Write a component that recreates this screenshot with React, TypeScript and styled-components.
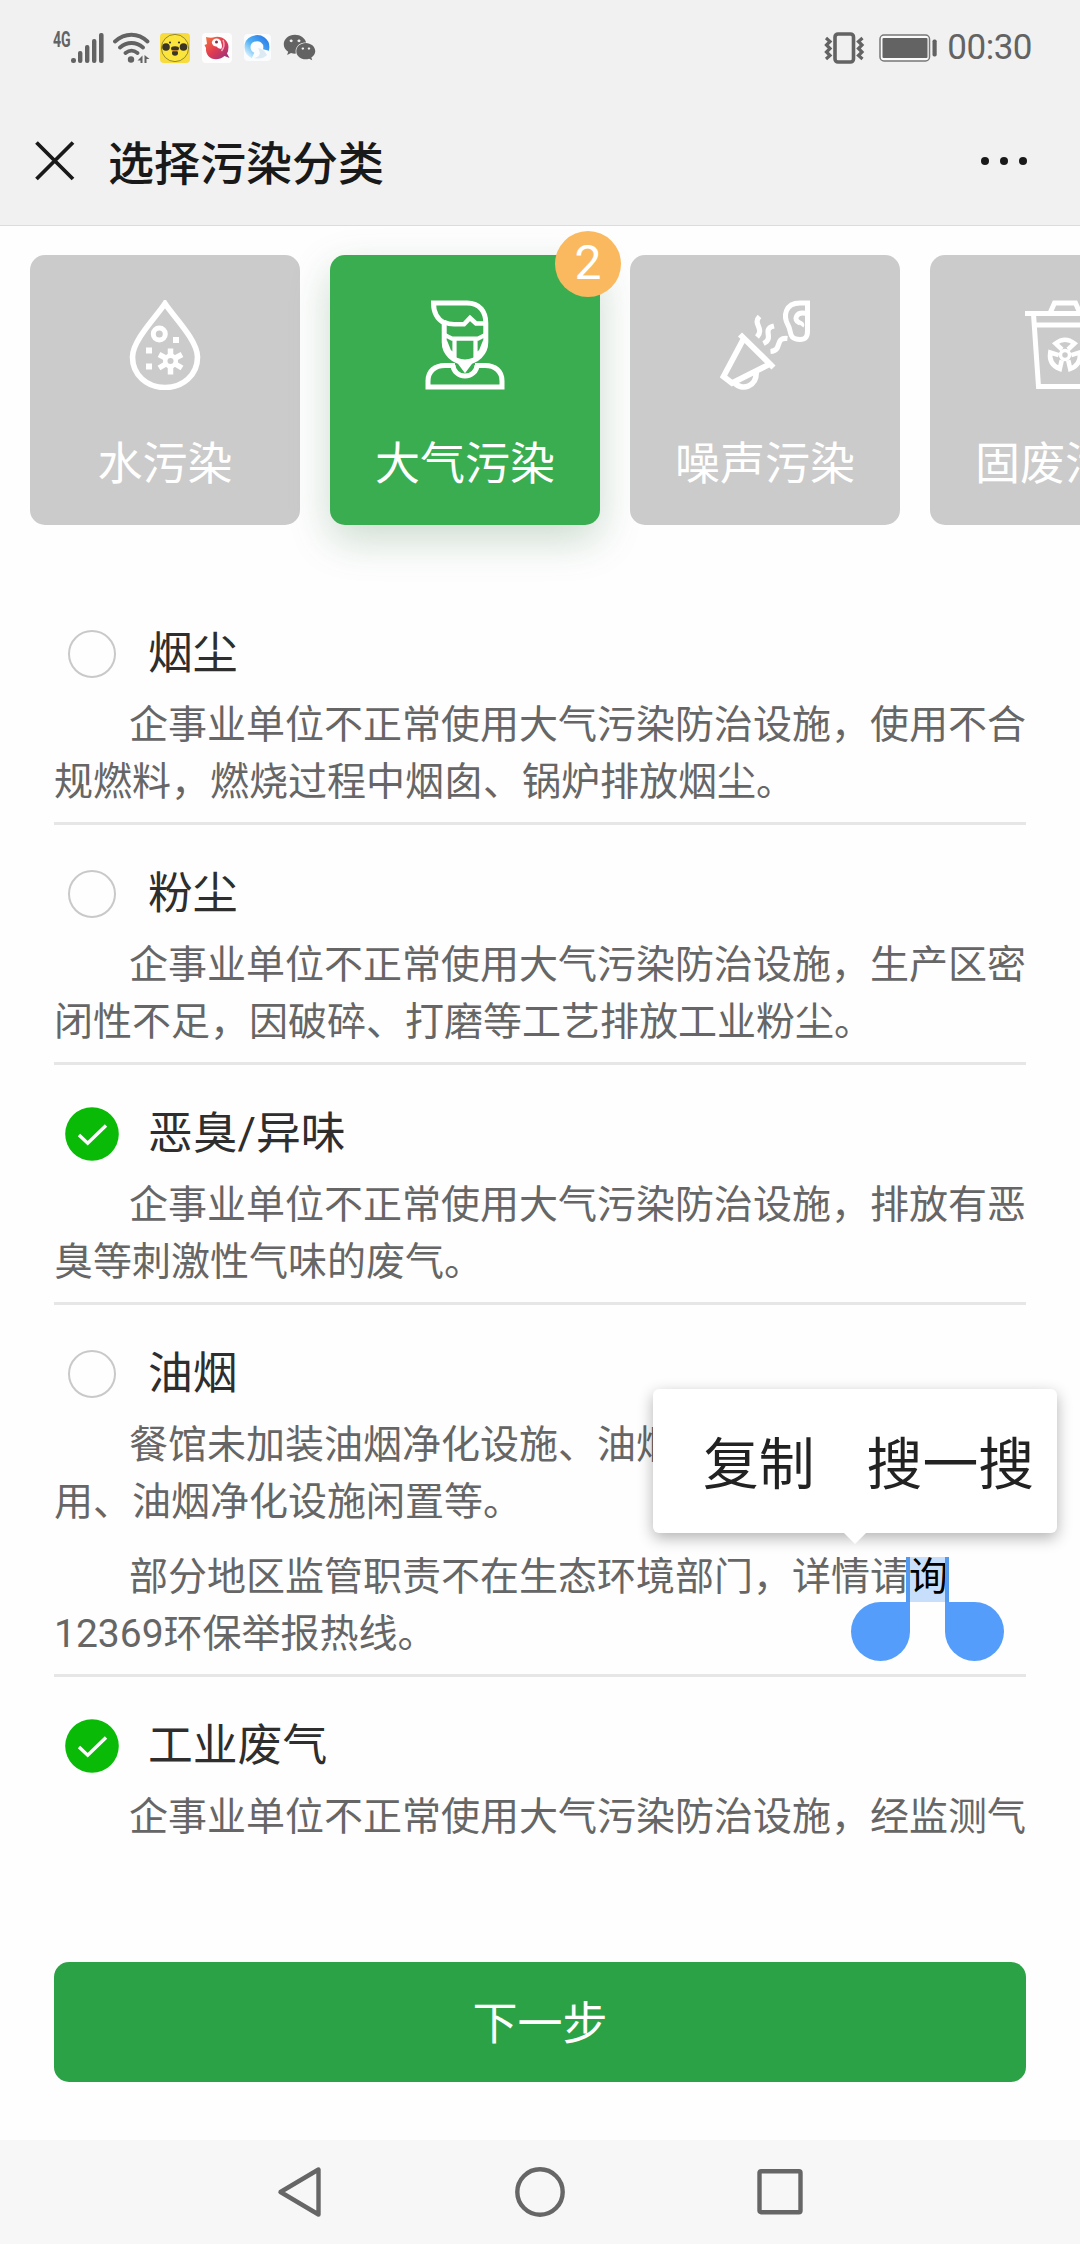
import React from 'react';
import styled, { createGlobalStyle } from 'styled-components';
import { FaWeixin } from 'react-icons/fa';

const GlobalStyle = createGlobalStyle`
  * { box-sizing: border-box; }
  body {
    margin: 0;
    background: #fefefe;
    font-family: Roboto, 'Noto Sans CJK SC', sans-serif;
    color: #2e2e2e;
  }
`;

const Screen = styled.div`
  position: relative;
  display: flex;
  flex-direction: column;
  width: 1080px;
  height: 2244px;
  overflow: hidden;
  background: #fefefe;
`;

const Header = styled.header`
  height: 226px;
  background: #f1f1f1;
  border-bottom: 1px solid #dcdcdc;
`;

const StatusBar = styled.div`
  display: flex;
  align-items: center;
  justify-content: space-between;
  height: 95px;
  padding: 0 48px 0 53px;
  color: #636363;
`;

const StatusGroup = styled.div<{ $gap: number }>`
  display: flex;
  align-items: center;
  gap: ${(p) => p.$gap}px;
  svg { display: block; }
`;

const NetworkLabel = styled.span`
  align-self: flex-start;
  margin: -2px -2px 0 0;
  font-size: 22px;
  line-height: 20px;
  font-weight: 700;
  transform: scaleX(0.64);
  transform-origin: left;
  width: 20px;
`;

const Clock = styled.span`
  margin-left: -3px;
  font-size: 35px;
  line-height: 40px;
  letter-spacing: -0.5px;
`;

const TitleBar = styled.div`
  display: flex;
  align-items: center;
  height: 130px;
  padding: 2px 52px 0 35px;
`;

const PageTitle = styled.h1`
  flex: 1;
  margin: 5px 0 0 33px;
  font-size: 46px;
  line-height: 60px;
  font-weight: 500;
  color: #191919;
`;

const Categories = styled.nav`
  display: flex;
  gap: 30px;
  padding: 29px 0 0 30px;
`;

const CategoryCard = styled.div<{ $active?: boolean }>`
  position: relative;
  display: flex;
  flex: none;
  flex-direction: column;
  align-items: center;
  width: 270px;
  height: 270px;
  padding-top: 45px;
  border-radius: 15px;
  color: #fff;
  background: ${(p) => (p.$active ? '#39ad50' : '#cbcbcb')};
  box-shadow: ${(p) => (p.$active ? '0 15px 42px rgba(45, 110, 60, 0.24)' : 'none')};
`;

const CategoryName = styled.span`
  margin-top: 45px;
  font-size: 45px;
  line-height: 60px;
  white-space: nowrap;
`;

const Badge = styled.span`
  position: absolute;
  top: -24px;
  right: -21px;
  width: 66px;
  height: 66px;
  border-radius: 50%;
  background: #fab95f;
  font-size: 48px;
  line-height: 64px;
  text-align: center;
`;

const OptionList = styled.main`
  display: flex;
  flex-direction: column;
  height: 1261px;
  margin-top: 60px;
  padding: 0 54px;
  overflow: hidden;
`;

const Option = styled.section`
  flex: none;
  padding: 39px 0 11px;
  border-bottom: 3px solid #e6e6e6;
`;

const OptionHead = styled.div`
  display: flex;
  align-items: center;
  height: 60px;
  margin-bottom: 13px;
`;

const RadioSlot = styled.span`
  display: flex;
  align-items: center;
  justify-content: center;
  width: 54px;
  height: 54px;
  margin: 0 29px 0 11px;
`;

const EmptyRadio = styled.span`
  width: 48px;
  height: 48px;
  border: 2px solid #c9c9c9;
  border-radius: 50%;
`;

const OptionTitle = styled.span`
  font-size: 44.8px;
  line-height: 60px;
`;

const Description = styled.p`
  margin: 0;
  font-size: 39px;
  line-height: 57px;
  text-indent: 75px;
  color: #666;
  & + & { margin-top: 18px; }
`;

const Selected = styled.span`
  position: relative;
  padding-bottom: 2px;
  color: #000;
  text-indent: 0;
  background: linear-gradient(transparent 3px, #c8dffb 3px);
`;

const Handle = styled.i<{ $side: 'left' | 'right' }>`
  position: absolute;
  top: 3px;
  ${(p) => (p.$side === 'left' ? 'right: 100%; margin-right: -1px;' : 'left: 100%; margin-left: -3px;')}
  width: 59px;
  height: 104px;
  &::before {
    content: '';
    position: absolute;
    top: 0;
    ${(p) => (p.$side === 'left' ? 'right' : 'left')}: 0;
    width: 4px;
    height: 50px;
    background: #5399f0;
  }
  &::after {
    content: '';
    position: absolute;
    bottom: 0;
    left: 0;
    width: 59px;
    height: 59px;
    background: #549dfb;
    border-radius: ${(p) => (p.$side === 'left' ? '50% 0 50% 50%' : '0 50% 50% 50%')};
  }
`;

const ContextMenu = styled.div`
  position: absolute;
  top: 1389px;
  left: 653px;
  display: flex;
  align-items: center;
  gap: 52px;
  width: 404px;
  height: 144px;
  padding: 8px 0 0 50px;
  border-radius: 6px;
  background: #fff;
  color: #222;
  font-size: 55.8px;
  line-height: 80px;
  white-space: nowrap;
  box-shadow: 0 5px 15px rgba(0, 0, 0, 0.3);
  &::after {
    content: '';
    position: absolute;
    top: 100%;
    left: 191px;
    border: 11px solid transparent;
    border-top-color: #fff;
    border-bottom: 0;
  }
`;

const Footer = styled.footer`
  flex: 1;
  padding: 116px 54px 0;
`;

const NextButton = styled.button`
  display: block;
  width: 972px;
  height: 120px;
  padding: 5px 0 0;
  border: 0;
  border-radius: 15px;
  background: #2ca246;
  color: #fff;
  font-family: inherit;
  font-size: 45px;
  line-height: 60px;
`;

const NavBar = styled.div`
  display: flex;
  align-items: center;
  justify-content: space-between;
  height: 104px;
  padding: 0 275px;
  background: #f7f7f7;
`;

const SignalIcon = () => (
  <svg width="33" height="32" viewBox="0 0 33 32" fill="currentColor">
    <rect x="0" y="26" width="5" height="5" rx="2.2" />
    <rect x="7" y="19" width="4.4" height="12" rx="2" />
    <rect x="14" y="13" width="4.4" height="18" rx="2" />
    <rect x="21" y="7" width="4.4" height="24" rx="2" />
    <rect x="28" y="1" width="4.6" height="30" rx="2" />
  </svg>
);

const WifiIcon = () => (
  <svg width="38" height="32" viewBox="0 0 38 32" fill="none" stroke="currentColor" strokeWidth="3.8" strokeLinecap="round">
    <path d="M2 9.500C12 .5 25 .5 34.500 9.500M7 15.500C14 9.500 23 9.500 30 15.500M12.500 21C16.500 17.800 20.500 17.800 24.500 21" />
    <circle cx="18" cy="27.500" r="3.200" fill="currentColor" stroke="none" />
    <path d="M29.500 23.500V31H27.500V28.500H24.500ZM31.500 23L36.500 27H33.500V31H31.500Z" fill="currentColor" stroke="none" />
  </svg>
);

const ChickIcon = () => (
  <svg width="30" height="30" viewBox="0 0 30 30">
    <rect width="30" height="30" rx="4" fill="#f8dc3e" />
    <circle cx="15" cy="15" r="13.600" fill="#fbe43c" stroke="#77712d" strokeWidth=".8" />
    <circle cx="6" cy="14" r="3.800" fill="#3a3524" />
    <circle cx="23.500" cy="14" r="3.800" fill="#3a3524" />
    <circle cx="10" cy="9.500" r="1.100" fill="#3a3524" />
    <circle cx="19" cy="9.500" r="1.100" fill="#3a3524" />
    <ellipse cx="15" cy="15.500" rx="4" ry="2.300" fill="#3a3524" />
    <ellipse cx="15" cy="20" rx="3" ry="2.700" fill="#3a3524" />
    <path d="M11.500 17.800H18.500" stroke="#e89b2c" strokeWidth="1" />
  </svg>
);

const BirdIcon = () => (
  <svg width="30" height="30" viewBox="0 0 30 30">
    <defs>
      <linearGradient id="bird" x1="0" y1="0" x2="1" y2="1">
        <stop offset="0" stopColor="#f4793f" />
        <stop offset=".5" stopColor="#e03a51" />
        <stop offset="1" stopColor="#8d3288" />
      </linearGradient>
    </defs>
    <rect width="30" height="30" rx="4" fill="#fdfdfd" />
    <path d="M4 4Q8 5 11 4.500C19 2 26.500 7 26.500 14Q26.500 18 25 20.500L27.500 25L22.500 23C14 30 3 25 4 15L2.500 12L5 11Z" fill="url(#bird)" />
    <ellipse cx="14.500" cy="9.500" rx="4.600" ry="4" fill="#fff" />
    <path d="M14 12.500Q16 16.500 19.500 15.500Q21 12 18 8Z" fill="#fff" />
    <circle cx="14.500" cy="9" r="1.500" fill="#7c3150" />
    <path d="M21 7Q23.500 13 19.500 18" stroke="#f5a8c4" strokeWidth="1.500" fill="none" />
  </svg>
);

const BrowserIcon = () => (
  <svg width="27" height="27" viewBox="0 0 27 27">
    <defs>
      <linearGradient id="ring" x1="1" y1="0" x2="0" y2="1">
        <stop offset="0" stopColor="#2c7de8" />
        <stop offset=".55" stopColor="#52b2f4" />
        <stop offset="1" stopColor="#d4effc" />
      </linearGradient>
    </defs>
    <rect width="27" height="27" rx="4" fill="#fbfcfd" />
    <path d="M9 21.500C1.500 18 2 8 8.500 5.200C16 2 24 7 22 16" fill="none" stroke="url(#ring)" strokeWidth="6" />
    <path d="M14 14Q20 15 23 21Q18 26 10 24Q19 22 14 14Z" fill="#dceaf3" />
  </svg>
);

const VibrateIcon = () => (
  <svg width="42" height="32" viewBox="0 0 42 32" fill="none" stroke="currentColor">
    <rect x="11" y="2" width="18.500" height="28" rx="3" strokeWidth="3.600" />
    <path d="M2 6L6 9.500L2.500 13L6 16.500L2.500 20L6 23.500L2 27M38.500 6L34.500 9.500L38 13L34.500 16.500L38 20L34.500 23.500L38.500 27" strokeWidth="3.200" />
  </svg>
);

const BatteryIcon = () => (
  <svg width="58" height="28" viewBox="0 0 58 28">
    <rect x="1" y="1" width="49.500" height="26" rx="4" fill="#fbfbfb" stroke="#777" strokeWidth="1.500" />
    <rect x="3.500" y="4" width="45" height="20" rx="1" fill="#636363" />
    <rect x="53.500" y="5.500" width="4.200" height="17" rx="1.700" fill="#636363" />
  </svg>
);

const CloseIcon = () => (
  <svg width="40" height="40" viewBox="0 0 40 40" stroke="#191919" strokeWidth="3.800">
    <path d="M1.500 1.500L38 38M38 1.500L1.500 38" />
  </svg>
);

const MoreIcon = () => (
  <svg width="48" height="10" viewBox="0 0 48 10" fill="#191919">
    <circle cx="5" cy="5" r="4" />
    <circle cx="24" cy="5" r="4" />
    <circle cx="43" cy="5" r="4" />
  </svg>
);

const CategoryIcon = styled.svg.attrs({
  width: 90,
  height: 90,
  viewBox: '0 0 90 90',
  fill: 'none',
  stroke: '#fff',
  strokeWidth: 5.6,
})`
  flex: none;
  display: block;
`;

const WaterIcon = () => (
  <CategoryIcon>
    <path d="M45 3.500C37 16 12.500 40 12.500 57C12.500 75 27 87.500 45 87.500S77.500 75 77.500 57C77.500 40 53 16 45 3.500Z" />
    <circle cx="39.300" cy="34" r="6" strokeWidth="5" />
    <path d="M53 40H59M26 50.500H32M26 66.500H32" strokeWidth="6" />
    <circle cx="50.500" cy="61" r="5.300" strokeWidth="4.500" />
    <path d="M50.500 56V48.500M50.500 66V74.500M46.500 58.500L39 54.500M54.500 58.500L62 54.500M46.500 63.500L39 68M54.500 63.500L62 68" strokeWidth="5.500" />
  </CategoryIcon>
);

const AirIcon = () => (
  <CategoryIcon>
    <path d="M13.500 3H47C60 3 65.800 12 65.800 23V42C65.800 53 57 62 45 62S24.200 53 24.200 42V23C17 19 13.500 12 13.500 3Z" strokeWidth="5" />
    <path d="M24 22Q29 24.500 35 24.300H44L50 18L56 23.500H65" strokeWidth="4.600" />
    <path d="M24 34.500L32 38.700H58L66 34.500M34.500 39V58M55.500 39V58M25 41L29 51L34 56M65 41L61 51L56 56" strokeWidth="4.200" />
    <path d="M8 87V81C8 71 15 65.500 25 65.500H35M55 65.500H65C75 65.500 82 71 82 81V87M5.500 87H84.500M33 65A12 11 0 0 0 57 65M39 61L45 69L51 61M45 62V68" strokeWidth="5" />
  </CategoryIcon>
);

const NoiseIcon = () => (
  <CategoryIcon>
    <path d="M20 34.500L53.500 67.500M24 38L3.500 76.500L12 83L49 64.500" strokeWidth="5.800" />
    <path d="M15 83C21 91 38 87 36 71" />
    <path d="M39.500 16.500C32 24 45 28 37 37M54 26C41 29 55 38 43.500 43.500M67.500 38.500C54 37 63 50.500 50.500 51.500" strokeWidth="5.200" />
    <path d="M90 3H80C65 3 63 16 68 25C72 32 68 39 80 39.500C86 39.500 87.500 36 87.500 31V3M88 14C75 10 73.500 21 79 22.500Q83 24 81.500 26" strokeWidth="5" />
  </CategoryIcon>
);

const WasteIcon = () => (
  <CategoryIcon>
    <path d="M5 13.500H85M30.500 12L34.500 3H55.500L59.500 12M13.500 14L18.500 86.500H71.500L76.500 14M14 25H76" strokeWidth="5" />
    {[0, 120, 240].map((angle) => (
      <path key={angle} transform={`rotate(${angle} 45 55)`} d="M42 49.500L35.500 43.500Q45 36 54.500 43.500L48 49.500" strokeWidth="4.600" />
    ))}
    <circle cx="45" cy="55" r="4.500" strokeWidth="3.500" />
  </CategoryIcon>
);

const CheckedIcon = () => (
  <svg width="54" height="54" viewBox="0 0 54 54">
    <circle cx="27" cy="27" r="26.800" fill="#09bb07" />
    <path d="M14 28L22.700 36.300L41 18.500" fill="none" stroke="#fff" strokeWidth="3.300" />
  </svg>
);

const BackIcon = () => (
  <svg width="50" height="54" viewBox="0 0 50 54" fill="none" stroke="#666" strokeWidth="4.400" strokeLinejoin="round">
    <path d="M43.500 4.500V49.500L5.500 27Z" />
  </svg>
);

const HomeIcon = () => (
  <svg width="54" height="54" viewBox="0 0 54 54" fill="none" stroke="#666" strokeWidth="4.400">
    <circle cx="27" cy="27" r="22.700" />
  </svg>
);

const RecentIcon = () => (
  <svg width="50" height="54" viewBox="0 0 50 54" fill="none" stroke="#666" strokeWidth="4.400">
    <rect x="4.500" y="6.200" width="41" height="41" rx="1.500" />
  </svg>
);

const categories = [
  { name: '水污染', Icon: WaterIcon },
  { name: '大气污染', Icon: AirIcon, count: 2 },
  { name: '噪声污染', Icon: NoiseIcon },
  { name: '固废污染', Icon: WasteIcon },
];

const options: { title: string; checked?: boolean; text: React.ReactNode[] }[] = [
  { title: '烟尘', text: ['企事业单位不正常使用大气污染防治设施，使用不合规燃料，燃烧过程中烟囱、锅炉排放烟尘。'] },
  { title: '粉尘', text: ['企事业单位不正常使用大气污染防治设施，生产区密闭性不足，因破碎、打磨等工艺排放工业粉尘。'] },
  { title: '恶臭/异味', checked: true, text: ['企事业单位不正常使用大气污染防治设施，排放有恶臭等刺激性气味的废气。'] },
  {
    title: '油烟',
    text: [
      '餐馆未加装油烟净化设施、油烟净化设施不能正常使用、油烟净化设施闲置等。',
      <>
        部分地区监管职责不在生态环境部门，详情请
        <Selected>
          询
          <Handle $side="left" />
          <Handle $side="right" />
        </Selected>
        12369环保举报热线。
      </>,
    ],
  },
  { title: '工业废气', checked: true, text: ['企事业单位不正常使用大气污染防治设施，经监测气'] },
];

export default function App() {
  return (
    <>
      <GlobalStyle />
      <Screen>
        <Header>
          <StatusBar>
            <StatusGroup $gap={9}>
              <StatusGroup $gap={0}>
                <NetworkLabel>4G</NetworkLabel>
                <SignalIcon />
              </StatusGroup>
              <WifiIcon />
              <StatusGroup $gap={12}>
                <ChickIcon />
                <BirdIcon />
                <BrowserIcon />
                <FaWeixin size={33} />
              </StatusGroup>
            </StatusGroup>
            <StatusGroup $gap={13}>
              <VibrateIcon />
              <BatteryIcon />
              <Clock>00:30</Clock>
            </StatusGroup>
          </StatusBar>
          <TitleBar>
            <CloseIcon />
            <PageTitle>选择污染分类</PageTitle>
            <MoreIcon />
          </TitleBar>
        </Header>

        <Categories>
          {categories.map(({ name, Icon, count }) => (
            <CategoryCard key={name} $active={!!count}>
              <Icon />
              <CategoryName>{name}</CategoryName>
              {count && <Badge>{count}</Badge>}
            </CategoryCard>
          ))}
        </Categories>

        <OptionList>
          {options.map(({ title, checked, text }) => (
            <Option key={title}>
              <OptionHead>
                <RadioSlot>{checked ? <CheckedIcon /> : <EmptyRadio />}</RadioSlot>
                <OptionTitle>{title}</OptionTitle>
              </OptionHead>
              {text.map((paragraph, i) => (
                <Description key={i}>{paragraph}</Description>
              ))}
            </Option>
          ))}
        </OptionList>

        <Footer>
          <NextButton>下一步</NextButton>
        </Footer>

        <NavBar>
          <BackIcon />
          <HomeIcon />
          <RecentIcon />
        </NavBar>

        <ContextMenu>
          <span>复制</span>
          <span>搜一搜</span>
        </ContextMenu>
      </Screen>
    </>
  );
}
